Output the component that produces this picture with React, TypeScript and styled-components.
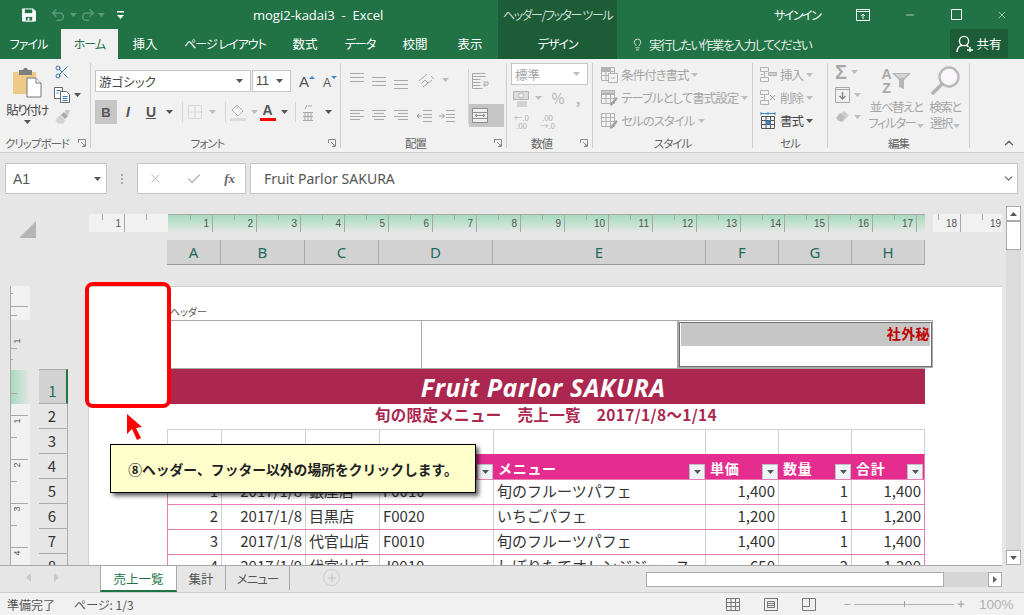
import styled, { createGlobalStyle } from "styled-components";
import { Check, ChevronDown, ChevronUp, Lightbulb, Minus, Plus, Redo2, Scissors, Undo2, X } from "lucide-react";

const JP = `"Noto Sans CJK JP", "Noto Sans", sans-serif`;
const GREEN = "#217346";
const DARK_GREEN = "#1c5d38";
const OFF = "#b2b2b2";

const Global = createGlobalStyle`
  html, body { margin: 0; padding: 0; background: #e6e6e6; }
  * { box-sizing: border-box; }
`;

/* ---------- small drawings ---------- */
const Caret = ({ off, color, up }: { off?: boolean; color?: string; up?: boolean }) => (
  <svg width="7" height="4" viewBox="0 0 7 4">
    <path d={up ? "M0 4h7L3.5 0z" : "M0 0h7L3.5 4z"} fill={color || (off ? "#bdbdbd" : "#555")} />
  </svg>
);

const LauncherMark = styled.svg`
  flex: none;
  margin-right: 4px;
`;

const Launcher = () => (
  <LauncherMark width="8" height="8" viewBox="0 0 8 8" fill="none" stroke="#8a8a8a">
    <path d="M.5 4V.5H7.5V7.5H4M3 3l4 4M5 7h2V5" />
  </LauncherMark>
);

const Lines = ({ rows, stroke = "#a8a8a8" }: { rows: [number, number][]; stroke?: string }) => (
  <svg width="16" height="16" viewBox="0 0 16 16" stroke={stroke}>
    {rows.map(([x, y], i) => (
      <path key={i} d={`M${x} ${y}.5H${16 - x}`} />
    ))}
  </svg>
);

const AlignV = ({ y }: { y: number }) => <Lines rows={[[1, y], [1, y + 4], [1, y + 8]]} />;

const AlignH = ({ kind }: { kind: "l" | "c" | "r" }) => (
  <svg width="16" height="14" viewBox="0 0 16 14" stroke="#a8a8a8">
    {[1, 4, 7, 10].map((y, i) => {
      const short = i % 2 === 1;
      const a = !short ? 1 : kind === "l" ? 1 : kind === "c" ? 3 : 5;
      const b = !short ? 15 : kind === "l" ? 11 : kind === "c" ? 13 : 15;
      return <path key={y} d={`M${a} ${y}.5H${b}`} />;
    })}
  </svg>
);

const Indent = ({ out }: { out?: boolean }) => (
  <svg width="17" height="14" viewBox="0 0 17 14" fill="none">
    <path d="M7 1.5h9M7 5.5h9M7 8.5h9M7 12.5h9" stroke="#a8a8a8" />
    <path d={out ? "M6 7H1M3.5 4.5 1 7l2.5 2.5" : "M0 7h5M3 4.5 5.5 7 3 9.5"} stroke="#9a9a9a" />
  </svg>
);

const SheetIcon = ({ tone = OFF, mark }: { tone?: string; mark?: "cond" | "table" | "style" }) => (
  <svg width="17" height="17" viewBox="0 0 17 17" fill="none" stroke={tone}>
    <path d="M.5 1.5h13v13H.5zM.5 5.5h13M.5 9.5h13M5 1.5v13M9.5 1.5v13" />
    {mark === "cond" && <path d="M.5 1.5h8v3h-8z" fill={tone} />}
    {mark === "cond" && <path d="M7.5 7.5h9v9h-9zM10 12h4" fill="#f1f1f1" />}
    {mark === "table" && <path d="M.5 1.5h13v3H.5z" fill="#c9c9c9" />}
    {mark !== "cond" && <path d="M9 15l6-7 2 1.5-6 7H9z" fill="#a0a0a0" stroke="none" />}
  </svg>
);

const CellIcon = ({ kind }: { kind: "ins" | "del" | "fmt" }) =>
  kind === "fmt" ? (
    <svg width="17" height="18" viewBox="0 0 17 18" fill="none" stroke="#555">
      <path d="M1 1.5h14M1 0v3M15 0v3M8 0v3" stroke="#3b7fc4" />
      <path d="M1.5 4.5h13v12h-13zM1.5 8.5h13M1.5 12.5h13M6 4.5v12M10.5 4.5v12" />
      <path d="M6 8.5h4.5v4H6z" fill="#3b7fc4" stroke="none" />
    </svg>
  ) : (
    <svg width="17" height="17" viewBox="0 0 17 17" fill="none" stroke={OFF}>
      <path d="M.5 1.5h8v4h-8zM.5 11.5h8v4h-8zM4.5 5.5v6M.5 8.5h3" />
      {kind === "ins" ? (
        <path d="M8.5 6.5h8v3h-8z" fill="#d0d0d0" />
      ) : (
        <path d="M10 6l5 5M15 6l-5 5" stroke="#9a9a9a" />
      )}
    </svg>
  );

const PasteIcon = () => (
  <svg width="30" height="30" viewBox="0 0 30 30">
    <path d="M1 4h23v22H1z" fill="#efc987" />
    <path d="M7 2h4l1-2h3l1 2h4v5H7z" fill="#7f7f7f" />
    <path d="M15 10h9l5 5v14H15z" fill="#fff" stroke="#777" />
    <path d="M24 10v5h5" fill="#fff" stroke="#777" />
  </svg>
);

const CopyIcon = () => (
  <svg width="16" height="16" viewBox="0 0 16 16" fill="#fff" stroke="#666">
    <path d="M.5.5h8v11h-8z" />
    <path d="M6.5 4.5h6l3 3v8h-9z" />
    <path d="M2.5 3.5h4M2.5 6h2M8.5 9.5h5M8.5 11.5h5M8.5 13.5h5" stroke="#2f78bd" />
  </svg>
);

const BrushIcon = () => (
  <svg width="17" height="15" viewBox="0 0 17 15">
    <path d="M11 0l5 0-1 4-3 1z" fill="#c8c8c8" />
    <path d="M10 2l4 4-3 3-4-4z" fill="#a9a9a9" />
    <path d="M6 5l5 5-2 4-3-1-1 1-4-3 2-1-1-1z" fill="#d2d2d2" />
  </svg>
);

const SaveIcon = () => (
  <svg width="15" height="14" viewBox="0 0 15 14" fill="none">
    <path d="M.5.5h11.5l2.5 2.5v10.5H.5z" stroke="#fff" fill="#fff" />
    <path d="M3 1h8v4H3z" fill={GREEN} />
    <path d="M3.5 8.5h8v5h-8z" fill={GREEN} stroke="#fff" />
    <path d="M6 10h2v3H6z" fill="#fff" />
  </svg>
);

const PersonPlus = () => (
  <svg width="18" height="18" viewBox="0 0 18 18" fill="none" stroke="#fff" strokeWidth="1.4">
    <circle cx="8" cy="6" r="4.6" />
    <path d="M1 17c0-4 2.5-6.5 5-6.5M10.500 10.500c.8.300 1.500.8 2 1.500M11 15h6M14 12v5" />
  </svg>
);

const FillIcon = () => (
  <svg width="17" height="17" viewBox="0 0 17 17" fill="none">
    <path d="M7 1l6 6-5 5-6-6z" stroke="#b5b5b5" fill="#f6f6f6" />
    <path d="M7 1v4" stroke="#b5b5b5" />
    <path d="M0 14h16v3H0z" fill="#dcdcdc" />
  </svg>
);

const SortIcon = () => (
  <svg width="19" height="16" viewBox="0 0 19 16">
    <path d="M0 0h19l-7 7v9l-5-2V7z" fill="#b5b5b5" />
    <path d="M3 1h13l-4 4H7z" fill="#d4d4d4" />
  </svg>
);

const LensIcon = () => (
  <svg width="29" height="29" viewBox="0 0 29 29" fill="none">
    <circle cx="18" cy="11" r="9.500" fill="#faf6fb" stroke="#b9b9b9" strokeWidth="2.400" />
    <path d="M11 18 2 27" stroke="#b3b3b3" strokeWidth="3.600" strokeLinecap="round" />
  </svg>
);

/* rulers: ticks every 44px from the left edge of the printed area */
const TopRuler = () => {
  const origin = 79;
  const marks = Array.from({ length: 22 }, (_, i) => i - 2);
  return (
    <svg width="913" height="18" viewBox="0 0 913 18" style={{ display: "block" }}>
      <defs>
        <linearGradient id="rulerTop" x1="0" y1="0" x2="0" y2="1">
          <stop offset="0" stopColor="#a5d8bd" />
          <stop offset="0.45" stopColor="#bce1cc" />
          <stop offset="1" stopColor="#e6e6e6" />
        </linearGradient>
      </defs>
      <rect x="0" width="79" height="18" fill="#f1f1f1" />
      <rect x="79" width="757" height="18" fill="url(#rulerTop)" />
      <rect x="844" width="69" height="18" fill="#f1f1f1" />
      <path d="M79 .5H836" stroke="#a8a8a8" />
      {marks.map((n) => {
        const x = origin + 44 * n;
        const label = n === 0 ? "" : String(Math.abs(n));
        return (
          <g key={n}>
            {n !== 0 && n > -2 && <path d={`M${x}.5 0V18`} stroke="#a8a8a8" />}
            <path d={`M${x + 22}.5 0V6`} stroke="#a8a8a8" />
            {n > -2 && label && (
              <text x={x - 3} y="13" textAnchor="end" fontSize="10" fontFamily="Liberation Sans" fill="#555">
                {label}
              </text>
            )}
          </g>
        );
      })}
    </svg>
  );
};

const SideRuler = () => {
  const longs: [number, string][] = [[49, "1"], [129, "1"], [173, "2"], [217, "3"], [261, "4"]];
  const shorts = [7, 29, 62, 73, 107, 151, 195, 239];
  return (
    <svg width="20" height="279" viewBox="0 0 20 279" style={{ display: "block" }}>
      <defs>
        <linearGradient id="rulerSide" x1="0" y1="0" x2="1" y2="0">
          <stop offset="0" stopColor="#a5d8bd" />
          <stop offset="1" stopColor="#e6e6e6" />
        </linearGradient>
      </defs>
      <rect width="20" height="34" fill="#f1f1f1" />
      <rect y="84" width="20" height="34" fill="url(#rulerSide)" />
      <rect y="118" width="20" height="161" fill="#f1f1f1" />
      <path d="M.5 0V279" stroke="#a8a8a8" />
      {shorts.map((y) => (
        <path key={y} d={`M0 ${y}.5H${y === 7 || y === 73 ? 3 : 7}`} stroke="#a8a8a8" />
      ))}
      {longs.map(([y, label], i) => (
        <g key={i}>
          <path d={`M0 ${y - (i === 0 ? 29 : 0)}.5H18`} stroke="#a8a8a8" />
          <text
            transform={`translate(10 ${y + 6}) rotate(-90)`}
            textAnchor="middle"
            fontSize="9"
            fontFamily="Liberation Sans"
            fill="#555"
          >
            {label}
          </text>
        </g>
      ))}
    </svg>
  );
};

/* ---------- page ---------- */
const Root = styled.div`
  position: relative;
  width: 1024px;
  height: 615px;
  overflow: hidden;
  display: flex;
  flex-direction: column;
  background: #e6e6e6;
  font-family: ${JP};
  font-feature-settings: "palt";
`;

const TitleBar = styled.div`
  height: 29px;
  display: flex;
  align-items: center;
  background: ${GREEN};
  color: #fff;
  font-size: 12px;
`;

const Quick = styled.span<{ $w: number }>`
  width: ${(p) => p.$w}px;
  flex: none;
  display: flex;
  align-items: center;
  justify-content: center;
`;

const DocTitle = styled.div`
  width: 372px;
  flex: none;
  padding-left: 127px;
  font: 13px "Open Sans", sans-serif;
  white-space: pre;
`;

const ToolContext = styled.div`
  width: 119px;
  height: 29px;
  flex: none;
  display: flex;
  align-items: center;
  justify-content: center;
  background: ${DARK_GREEN};
  color: #cfdcd4;
  font-size: 12px;
  letter-spacing: -1.4px;
  white-space: nowrap;
`;

const SignIn = styled.div`
  margin-left: 157px;
  width: 46px;
  flex: none;
  font-size: 12px;
  letter-spacing: -1.5px;
  text-align: center;
  white-space: nowrap;
`;

const TabBar = styled.div`
  height: 30px;
  display: flex;
  align-items: stretch;
  background: ${GREEN};
  color: #fff;
  font-size: 12.500px;
`;

const Tab = styled.div<{ $w: number; $active?: boolean; $context?: boolean; $kana?: boolean }>`
  width: ${(p) => p.$w}px;
  flex: none;
  display: flex;
  align-items: center;
  justify-content: center;
  padding-bottom: 1px;
  white-space: pre;
  font-size: ${(p) => (p.$kana ? 12 : 12.5)}px;
  letter-spacing: ${(p) => (p.$kana ? -1 : 0)}px;
  background: ${(p) => (p.$active ? "#f1f1f1" : p.$context ? DARK_GREEN : "transparent")};
  color: ${(p) => (p.$active ? GREEN : "#fff")};
`;

const TellMe = styled.div`
  margin-left: 14px;
  width: 319px;
  flex: none;
  display: flex;
  align-items: center;
  gap: 5px;
  color: #e2ece6;
  font-size: 12.500px;
  letter-spacing: -1.5px;
`;

const Share = styled.div`
  width: 58px;
  height: 29px;
  flex: none;
  display: flex;
  align-items: center;
  justify-content: center;
  gap: 2px;
  background: ${DARK_GREEN};
  font-size: 12.500px;
`;

const Ribbon = styled.div`
  position: relative;
  height: 94px;
  flex: none;
  display: flex;
  background: #f1f1f1;
  border-bottom: 1px solid #cdcdcd;
  color: #444;
`;

const Group = styled.div<{ $w: number; $pad?: number }>`
  width: ${(p) => p.$w}px;
  flex: none;
  height: 85px;
  margin-top: 4px;
  display: flex;
  flex-direction: column;
  padding-left: ${(p) => p.$pad ?? 0}px;
  border-right: 1px solid #cfcfcf;
`;

const GroupBody = styled.div`
  height: 71px;
  flex: none;
  display: flex;
`;

const GroupFoot = styled.div<{ $pad?: number }>`
  height: 18px;
  flex: none;
  display: flex;
  align-items: center;
  margin-left: ${(p) => -(p.$pad ?? 0)}px;
`;

const GroupName = styled.span<{ $launcher?: boolean }>`
  flex: 1;
  text-align: center;
  font-size: 11.500px;
  letter-spacing: -1px;
  white-space: nowrap;
  color: #666;
  padding-right: ${(p) => (p.$launcher ? 4 : 0)}px;
`;

const Col = styled.div<{ $w?: number; $gap?: number; $top?: number }>`
  width: ${(p) => (p.$w ? `${p.$w}px` : "auto")};
  flex: none;
  display: flex;
  flex-direction: column;
  align-items: flex-start;
  gap: ${(p) => p.$gap ?? 0}px;
  padding-top: ${(p) => p.$top ?? 0}px;
`;

const Row = styled.div<{ $gap?: number }>`
  display: flex;
  align-items: center;
  gap: ${(p) => p.$gap ?? 0}px;
`;

const Tool = styled.span<{ $w: number; $h?: number; $on?: boolean; $off?: boolean }>`
  width: ${(p) => p.$w}px;
  height: ${(p) => p.$h ?? 24}px;
  flex: none;
  display: flex;
  align-items: center;
  justify-content: center;
  background: ${(p) => (p.$on ? "#c6c6c6" : "transparent")};
  color: ${(p) => (p.$off ? OFF : "#444")};
`;

const BigLabel = styled.div<{ $off?: boolean }>`
  font-size: 12.500px;
  line-height: 16px;
  letter-spacing: -1.5px;
  white-space: nowrap;
  text-align: center;
  color: ${(p) => (p.$off ? "#a6a6a6" : "#444")};
`;

const Sep = styled.span`
  width: 1px;
  height: 20px;
  flex: none;
  background: #d4d4d4;
`;

const Combo = styled.div<{ $w: number; $h?: number; $off?: boolean }>`
  width: ${(p) => p.$w}px;
  height: ${(p) => p.$h ?? 22}px;
  flex: none;
  display: flex;
  align-items: center;
  justify-content: space-between;
  padding: 0 7px 0 3px;
  background: #fff;
  border: 1px solid #c6c6c6;
  font-size: 12.500px;
  color: ${(p) => (p.$off ? "#a6a6a6" : "#444")};
`;

const LetterA = styled.span<{ $size: number; $bold?: boolean; $italic?: boolean; $line?: boolean; $color?: string }>`
  font-family: "Liberation Sans", sans-serif;
  font-size: ${(p) => p.$size}px;
  line-height: 1;
  font-weight: ${(p) => (p.$bold ? 700 : 400)};
  font-style: ${(p) => (p.$italic ? "italic" : "normal")};
  text-decoration: ${(p) => (p.$line ? "underline" : "none")};
  color: ${(p) => p.$color || "#555"};
`;

const ColorA = styled.span`
  width: 16px;
  display: flex;
  flex-direction: column;
  align-items: center;
  font: 700 14px/14px "Liberation Sans", sans-serif;
  color: #555;
  &::after {
    content: "";
    width: 16px;
    height: 3px;
    margin-top: 1px;
    background: #f00;
  }
`;

const StyleItem = styled.div<{ $off?: boolean; $gap?: number }>`
  height: 23px;
  display: flex;
  align-items: center;
  gap: ${(p) => p.$gap ?? 3}px;
  font-size: 12.500px;
  letter-spacing: -1px;
  white-space: nowrap;
  color: ${(p) => (p.$off ? "#a6a6a6" : "#444")};
`;

const Collapse = styled.span`
  position: absolute;
  right: 8px;
  bottom: 2px;
  display: flex;
`;

const FormulaStrip = styled.div`
  height: 53px;
  flex: none;
  display: flex;
  align-items: flex-start;
  padding: 10px 6px 0 5px;
`;

const NameBox = styled.div`
  width: 102px;
  height: 31px;
  flex: none;
  display: flex;
  align-items: center;
  justify-content: space-between;
  padding: 0 5px 0 7px;
  background: #fff;
  border: 1px solid #c6c6c6;
  font: 14px "Liberation Sans", sans-serif;
  color: #555;
`;

const Grip = styled.span`
  width: 30px;
  height: 31px;
  flex: none;
  display: flex;
  flex-direction: column;
  align-items: center;
  justify-content: center;
  gap: 2px;
  & > i {
    width: 2px;
    height: 2px;
    background: #a8a8a8;
  }
`;

const FormulaTools = styled.div`
  width: 109px;
  height: 31px;
  flex: none;
  display: flex;
  align-items: center;
  justify-content: space-between;
  padding: 0 10px;
  margin-right: 4px;
  background: #fff;
  border: 1px solid #c6c6c6;
`;

const Fx = styled.span`
  font: italic 700 13px "Liberation Serif", serif;
  color: #666;
`;

const FormulaInput = styled.div`
  flex: 1;
  height: 31px;
  display: flex;
  align-items: center;
  justify-content: space-between;
  padding: 0 2px 0 13px;
  background: #fff;
  border: 1px solid #c6c6c6;
  font: 14px "Noto Sans", sans-serif;
  color: #555;
`;

const Main = styled.div`
  height: 359px;
  flex: none;
  display: flex;
`;

const Workspace = styled.div`
  width: 1002px;
  flex: none;
  display: flex;
  flex-direction: column;
  padding-top: 8px;
`;

const RulerRow = styled.div`
  height: 18px;
  flex: none;
  display: flex;
`;

const Corner = styled.div`
  width: 89px;
  flex: none;
  padding: 5px 0 0 19px;
`;

const ColHeads = styled.div`
  height: 25px;
  flex: none;
  margin: 8px 0 21px 167px;
  width: 758px;
  display: flex;
  border-bottom: 1px solid #999;
`;

const ColHead = styled.div<{ $w: number }>`
  width: ${(p) => p.$w}px;
  flex: none;
  display: flex;
  align-items: center;
  justify-content: center;
  background: #d2d2d2;
  border-right: 1px solid #ababab;
  font: 15px "Noto Sans", sans-serif;
  color: #1f6b5c;
`;

const BodyRow = styled.div`
  height: 279px;
  flex: none;
  overflow: hidden;
  display: flex;
  padding-left: 10px;
`;

const RowHeads = styled.div`
  width: 29px;
  flex: none;
  margin: 0 20px 0 9px;
  padding-top: 83px;
  display: flex;
  flex-direction: column;
`;

const RowHead = styled.div<{ $h: number; $active?: boolean }>`
  height: ${(p) => p.$h}px;
  flex: none;
  display: flex;
  align-items: flex-end;
  justify-content: center;
  padding: 0 ${(p) => (p.$active ? 0 : 2)}px 1px 0;
  background: ${(p) => (p.$active ? "#d2d2d2" : "#e6e6e6")};
  border-top: ${(p) => (p.$active ? "1px solid #ababab" : "none")};
  border-bottom: 1px solid #ababab;
  border-right: ${(p) => (p.$active ? `2px solid ${GREEN}` : "1px solid #ababab")};
  font: 15px/22px ${JP};
  color: ${(p) => (p.$active ? "#1f6b5c" : "#333")};
`;

const Page = styled.div`
  width: 914px;
  flex: none;
  background: #fff;
  border-left: 1px solid #d0d0d0;
  border-top: 1px solid #cfcfcf;
  padding-left: 78px;
`;

const HeaderTag = styled.div`
  height: 33px;
  padding: 19px 0 0 3px;
  font-size: 10px;
  line-height: 12px;
  color: #555;
`;

const HeaderBox = styled.div`
  width: 766px;
  height: 48px;
  display: flex;
  border-top: 1px solid #a9a9a9;
`;

const HeaderPart = styled.div<{ $w: number }>`
  flex: none;
  width: ${(p) => p.$w}px;
  border-right: 1px solid #a9a9a9;
`;

const HeaderActive = styled.div`
  flex: 1;
  padding: 1px 2px 0 1px;
  border: 1px solid #a9a9a9;
  outline: 1px solid #6e6e6e;
  outline-offset: -2px;
  border-top: none;
`;

const Shaded = styled.div`
  height: 24px;
  margin-left: 1px;
  background: #c6c6c6;
  text-align: right;
  font-weight: 700;
  font-size: 14px;
  letter-spacing: 0.4px;
  font-feature-settings: normal;
  line-height: 23px;
  color: #c00000;
`;

const TableWrap = styled.div`
  width: 758px;
  display: flex;
  flex-direction: column;
  font-feature-settings: normal;
`;

const TitleRow = styled.div`
  height: 36px;
  flex: none;
  display: flex;
  align-items: center;
  justify-content: center;
  padding-right: 6px;
  background: #ac274f;
  border-top: 1px solid #a9a9a9;
  color: #fff;
  font: italic 700 25px "Open Sans", sans-serif;
  letter-spacing: 0.5px;
`;

const SubRow = styled.div`
  height: 25px;
  flex: none;
  display: flex;
  align-items: center;
  justify-content: center;
  padding-bottom: 5px;
  color: #ac274f;
  font-weight: 700;
  font-size: 15.500px;
  letter-spacing: 0.35px;
  white-space: pre;
`;

const GridRow = styled.div<{ $kind: "blank" | "head" | "data" }>`
  height: 25px;
  flex: none;
  display: grid;
  grid-template-columns: 54px 84px 74px 114px 212px 73px 73px 72px;
  background: ${(p) => (p.$kind === "head" ? "#e42d8f" : "#fff")};
  border-top: 1px solid ${(p) => (p.$kind === "blank" ? "#d0d0d0" : p.$kind === "head" ? "#e42d8f" : "#e97cb7")};
  border-left: 1px solid ${(p) => (p.$kind === "blank" ? "#d0d0d0" : "#e97cb7")};
  border-right: 1px solid ${(p) => (p.$kind === "blank" ? "#d0d0d0" : "#e97cb7")};
`;

const Cell = styled.div<{ $right?: boolean }>`
  min-width: 0;
  padding: 0 ${(p) => (p.$right ? 3 : 0)}px 0 ${(p) => (p.$right ? 0 : 3)}px;
  border-right: 1px solid #d0d0d0;
  text-align: ${(p) => (p.$right ? "right" : "left")};
  font-size: 15px;
  line-height: 22px;
  white-space: nowrap;
  color: #333;
  &:last-child {
    border-right: none;
  }
`;

const HeadCell = styled.div`
  min-width: 0;
  display: flex;
  align-items: center;
  justify-content: space-between;
  padding: 0 1px 3px 4px;
  color: #fff;
  font-weight: 700;
  font-size: 14px;
  letter-spacing: 0.7px;
`;

const FilterBtn = styled.span`
  width: 16px;
  height: 16px;
  flex: none;
  margin-top: 9px;
  display: flex;
  align-items: center;
  justify-content: center;
  background: #f1f4f7;
  border: 1px solid #b9c0c6;
`;

const ScrollCol = styled.div`
  width: 15px;
  flex: none;
  margin-left: 4px;
  display: flex;
  flex-direction: column;
  background: #dcdcdc;
`;

const ScrollBtn = styled.span<{ $w?: number }>`
  width: ${(p) => p.$w ?? 15}px;
  height: 15px;
  flex: none;
  display: flex;
  align-items: center;
  justify-content: center;
  background: #fff;
  border: 1px solid #ababab;
`;

const VThumb = styled.div`
  height: 29px;
  flex: none;
  background: #fff;
  border: 1px solid #ababab;
`;

const Spacer = styled.div`
  flex: 1;
`;

const SheetStrip = styled.div`
  height: 27px;
  flex: none;
  width: 1002px;
  display: flex;
  align-items: flex-start;
  border-top: 1px solid #a9a9a9;
`;

const SheetNav = styled.div`
  width: 100px;
  height: 23px;
  flex: none;
  display: flex;
  align-items: center;
  padding-left: 26px;
  gap: 23px;
`;

const SheetTab = styled.div<{ $w: number; $active?: boolean; $kana?: boolean }>`
  width: ${(p) => p.$w}px;
  height: 24px;
  margin-top: ${(p) => (p.$active ? -1 : 0)}px;
  flex: none;
  display: flex;
  align-items: center;
  justify-content: center;
  font-size: 12.500px;
  letter-spacing: ${(p) => (p.$kana ? -1 : 0)}px;
  font-feature-settings: ${(p) => (p.$active ? "normal" : "palt")};
  color: ${(p) => (p.$active ? GREEN : "#555")};
  background: ${(p) => (p.$active ? "#fff" : "transparent")};
  border-left: ${(p) => (p.$active ? "1px solid #a9a9a9" : "none")};
  border-top: ${(p) => (p.$active ? "1px solid #a9a9a9" : "none")};
  border-right: 1px solid #a9a9a9;
  border-bottom: ${(p) => (p.$active ? `2px solid ${GREEN}` : "none")};
  box-sizing: ${(p) => (p.$active ? "content-box" : "border-box")};
`;

const AddSheet = styled.span`
  width: 17px;
  height: 17px;
  flex: none;
  margin: 3px 0 0 33px;
  display: flex;
  align-items: center;
  justify-content: center;
  border: 1px solid #cdcdcd;
  border-radius: 50%;
  color: #c4c4c4;
`;

const HScroll = styled.div`
  width: 356px;
  height: 15px;
  margin: 6px 0 0 auto;
  flex: none;
  display: flex;
  background: #d6d6d6;
`;

const HThumb = styled.div`
  width: 298px;
  flex: none;
  background: #fff;
  border: 1px solid #ababab;
`;

const StatusBar = styled.div`
  height: 23px;
  flex: none;
  display: flex;
  align-items: center;
  padding-left: 7px;
  background: #f1f1f1;
  border-top: 1px solid #cdcdcd;
  font-size: 12px;
  color: #555;
`;

const StatusText = styled.span<{ $w: number }>`
  width: ${(p) => p.$w}px;
  flex: none;
  white-space: nowrap;
`;

const ViewBtn = styled.span`
  width: 38px;
  flex: none;
  display: flex;
  justify-content: center;
`;

const Slider = styled.div`
  width: 100px;
  height: 1px;
  flex: none;
  margin: 0 2px;
  display: flex;
  justify-content: center;
  align-items: center;
  background: #b0b0b0;
  &::after {
    content: "";
    width: 1px;
    height: 6px;
    background: #a0a0a0;
  }
`;

const Percent = styled.span`
  margin-left: 13px;
  font: 13.500px "Liberation Sans", sans-serif;
  color: #b0b0b0;
`;

const RedBox = styled.div`
  position: absolute;
  left: 85px;
  top: 282px;
  width: 86px;
  height: 126px;
  border: 4px solid #f00;
  border-radius: 8px;
`;

const RedArrow = styled.svg`
  position: absolute;
  left: 126px;
  top: 414px;
`;

const Callout = styled.div`
  position: absolute;
  left: 110px;
  top: 444px;
  width: 366px;
  height: 49px;
  display: flex;
  align-items: center;
  justify-content: center;
  background: #ffffcc;
  border: 1px solid #000;
  box-shadow: 3px 3px 4px rgba(0, 0, 0, 0.6);
  font-weight: 700;
  font-size: 13.800px;
  font-feature-settings: normal;
  color: #222;
  white-space: nowrap;
`;

/* ---------- data ---------- */
const colHeads: [string, number][] = [
  ["A", 54], ["B", 84], ["C", 74], ["D", 114], ["E", 213], ["F", 73], ["G", 73], ["H", 73],
];

const sales = [
  ["1", "2017/1/8", "銀座店", "F0010", "旬のフルーツパフェ", "1,400", "1", "1,400"],
  ["2", "2017/1/8", "目黒店", "F0020", "いちごパフェ", "1,200", "1", "1,200"],
  ["3", "2017/1/8", "代官山店", "F0010", "旬のフルーツパフェ", "1,400", "1", "1,400"],
  ["4", "2017/1/9", "代官山店", "J0010", "しぼりたてオレンジジュース", "650", "2", "1,300"],
];

const rowNums: [string, number][] = [
  ["1", 35], ["2", 25], ["3", 25], ["4", 25], ["5", 25], ["6", 25], ["7", 25], ["8", 25],
];

const tabs: [string, number, boolean][] = [
  ["挿入", 54, false], ["ページ レイアウト", 106, true], ["数式", 54, false],
  ["データ", 56, true], ["校閲", 54, false], ["表示", 56, false],
];

const headCols = ["", "", "", "", "メニュー", "単価", "数量", "合計"];

export default function App() {
  return (
    <Root>
      <Global />
      <TitleBar>
        <Quick $w={22} />
        <Quick $w={14}><SaveIcon /></Quick>
        <Quick $w={14} />
        <Quick $w={16}><Undo2 size={16} color="#5c9a79" strokeWidth={2.2} /></Quick>
        <Quick $w={14}><Caret color="#5c9a79" /></Quick>
        <Quick $w={16}><Redo2 size={16} color="#5c9a79" strokeWidth={2.2} /></Quick>
        <Quick $w={10}><Caret color="#5c9a79" /></Quick>
        <Quick $w={8} />
        <Quick $w={12}>
          <svg width="9" height="8" viewBox="0 0 9 8">
            <path d="M1 0h7v1.500H1zM1 4h7L4.500 8z" fill="#fff" />
          </svg>
        </Quick>
        <DocTitle>{"mogi2-kadai3  -  Excel"}</DocTitle>
        <ToolContext>ヘッダー/フッター ツール</ToolContext>
        <SignIn>サインイン</SignIn>
        <Quick $w={36} />
        <Quick $w={14}>
          <svg width="14" height="12" viewBox="0 0 14 12" fill="none" stroke="#fff">
            <path d="M.5.5h13v11H.5zM.5 2.500h13M7 10V5M5 7l2-2 2 2" />
          </svg>
        </Quick>
        <Quick $w={34} />
        <Quick $w={12}><Minus size={12} color="#fff" strokeWidth={1.2} /></Quick>
        <Quick $w={34} />
        <Quick $w={12}>
          <svg width="11" height="11" viewBox="0 0 11 11" fill="none" stroke="#fff">
            <path d="M.5.5h10v10H.5z" />
          </svg>
        </Quick>
        <Quick $w={34} />
        <Quick $w={12}><X size={14} color="#fff" strokeWidth={1.1} /></Quick>
      </TitleBar>

      <TabBar>
        <Tab $w={57} $kana>ファイル</Tab>
        <Tab $w={57} $active $kana style={{ marginLeft: 4 }}>ホーム</Tab>
        {tabs.map(([t, w, kana]) => (
          <Tab key={t} $w={w} $kana={kana}>{t}</Tab>
        ))}
        <Tab $w={119} $context $kana>デザイン</Tab>
        <TellMe>
          <Lightbulb size={13} color="#fff" strokeWidth={1.4} />
          実行したい作業を入力してください
        </TellMe>
        <Share>
          <PersonPlus />
          共有
        </Share>
      </TabBar>

      <Ribbon>
        <Group $w={91}>
          <GroupBody>
            <Col $w={54} $top={5} style={{ alignItems: "center" }}>
              <PasteIcon />
              <BigLabel style={{ marginTop: 2, lineHeight: "20px" }}>貼り付け</BigLabel>
              <Caret />
            </Col>
            <Col $w={17} $top={1} $gap={7}>
              <Scissors size={16} color="#2f6ca8" strokeWidth={1.4} />
              <Row $gap={4}><CopyIcon /><Caret /></Row>
              <BrushIcon />
            </Col>
          </GroupBody>
          <GroupFoot><GroupName $launcher>クリップボード</GroupName><Launcher /></GroupFoot>
        </Group>

        <Group $w={250} $pad={4}>
          <GroupBody>
            <Col $gap={8} $top={7}>
              <Row $gap={1}>
                <Combo $w={156}>游ゴシック<Caret /></Combo>
                <Combo $w={39}>
                  <span style={{ fontFamily: "Liberation Sans" }}>11</span>
                  <Caret />
                </Combo>
                <Tool $w={22} $h={22} style={{ marginLeft: 4 }}>
                  <LetterA $size={15}>A</LetterA>
                  <svg width="6" height="12" viewBox="0 0 6 12"><path d="M0 4l3-3 3 3z" fill="#3f84c6" /></svg>
                </Tool>
                <Tool $w={22} $h={22}>
                  <LetterA $size={12} style={{ marginTop: 4 }}>A</LetterA>
                  <svg width="6" height="12" viewBox="0 0 6 12"><path d="M0 1h6L3 4z" fill="#3f84c6" /></svg>
                </Tool>
              </Row>
              <Row>
                <Tool $w={22} $on><LetterA $size={13} $bold>B</LetterA></Tool>
                <Tool $w={22}><LetterA $size={14} $italic $bold>I</LetterA></Tool>
                <Tool $w={24}><LetterA $size={14} $bold $line>U</LetterA></Tool>
                <Tool $w={13}><Caret /></Tool>
                <Tool $w={6} />
                <Sep />
                <Tool $w={23}>
                  <svg width="14" height="14" viewBox="0 0 14 14" fill="none" stroke="#c4bccb" strokeDasharray="1 1">
                    <path d="M.5.5h13v13H.5zM.5 7h13M7 .5v13" />
                  </svg>
                </Tool>
                <Tool $w={12}><Caret off /></Tool>
                <Tool $w={7} />
                <Sep />
                <Tool $w={24}><FillIcon /></Tool>
                <Tool $w={8}><Caret off /></Tool>
                <Tool $w={19}><ColorA>A</ColorA></Tool>
                <Tool $w={14}><Caret /></Tool>
                <Tool $w={4} />
                <Sep />
                <Tool $w={24}>
                  <svg width="12" height="17" viewBox="0 0 12 17" fill="none" stroke="#a8a8a8">
                    <path d="M5 1l-2 4M6 2h4M1 8.500h10M3 8.500v8M9 8.500v8M1 12.500h10M1 16.500h10M6 8.500v8" />
                  </svg>
                </Tool>
                <Tool $w={16}><Caret /></Tool>
              </Row>
            </Col>
          </GroupBody>
          <GroupFoot $pad={4}><GroupName $launcher>フォント</GroupName><Launcher /></GroupFoot>
        </Group>

        <Group $w={166} $pad={5}>
          <GroupBody>
            <Col $w={122} $gap={14} $top={5}>
              <Row>
                <Tool $w={22}><AlignV y={1} /></Tool>
                <Tool $w={22} style={{ paddingTop: 3 }}><AlignV y={3} /></Tool>
                <Tool $w={22} style={{ paddingTop: 6 }}><AlignV y={5} /></Tool>
                <Tool $w={28} $off>
                  <svg width="19" height="17" viewBox="0 0 19 17" fill="none" stroke="#a8a8a8">
                    <path d="M2 9l8-7M4 12l4-4 3 3M6 15l9-7M14 4l3 3" />
                  </svg>
                </Tool>
                <Tool $w={10}><Caret off /></Tool>
              </Row>
              <Row>
                <Tool $w={22} $h={20}><AlignH kind="l" /></Tool>
                <Tool $w={22} $h={20}><AlignH kind="c" /></Tool>
                <Tool $w={22} $h={20}><AlignH kind="r" /></Tool>
                <Tool $w={24} $h={20}><Indent out /></Tool>
                <Tool $w={22} $h={20}><Indent /></Tool>
              </Row>
            </Col>
            <Sep style={{ height: 55, marginTop: 6 }} />
            <Col $gap={13} $top={7}>
              <Tool $w={34} $h={21} style={{ justifyContent: "flex-start", paddingLeft: 3 }}>
                <svg width="17" height="16" viewBox="0 0 17 16" fill="none" stroke="#a8a8a8">
                  <path d="M.5.5h13M.5 3.500h13M.5.5v15M.5 6.500h8M.5 9.500h8M.5 12.500h8M.5 15.500h10M11 9h5v3h-4M13.500 10l-2 2 2 2" />
                </svg>
              </Tool>
              <Tool $w={35} $h={23} $on style={{ justifyContent: "flex-start", paddingLeft: 3 }}>
                <svg width="16" height="15" viewBox="0 0 16 15" fill="#efefef" stroke="#8f8f8f">
                  <path d="M.5.5h15v14H.5zM.5 4.500h15M.5 10.500h15M3 7.500h10M3 7.500l2-1.500M3 7.500l2 1.500M13 7.500l-2-1.500M13 7.500l-2 1.500" />
                </svg>
              </Tool>
            </Col>
          </GroupBody>
          <GroupFoot $pad={5}><GroupName $launcher>配置</GroupName><Launcher /></GroupFoot>
        </Group>

        <Group $w={86} $pad={4}>
          <GroupBody>
            <Col $gap={3}>
              <Combo $w={77} $off>標準<Caret off /></Combo>
              <Row style={{ height: 20 }}>
                <Tool $w={20} $h={20}>
                  <svg width="17" height="17" viewBox="0 0 17 17" fill="none" stroke="#b5b5b5">
                    <path d="M.5 1.500h15v8H.5z" fill="#dcdcdc" />
                    <circle cx="8" cy="5.500" r="2.500" fill="#f1f1f1" />
                    <path d="M4 12h10M4 14h10M4 16h10" />
                  </svg>
                </Tool>
                <Tool $w={14} $h={20}><Caret off /></Tool>
                <Tool $w={26} $h={20} $off style={{ fontSize: 14 }}>%</Tool>
                <Tool $w={14} $h={20} $off style={{ fontWeight: 700, fontSize: 13 }}>,</Tool>
              </Row>
              <Row $gap={5} style={{ height: 22 }}>
                <Tool $w={21} $h={22} $off style={{ fontSize: 8, lineHeight: "8px", textAlign: "center" }}>←.0<br />.00</Tool>
                <Tool $w={21} $h={22} $off style={{ fontSize: 8, lineHeight: "8px", textAlign: "center" }}>.00<br />→.0</Tool>
              </Row>
            </Col>
          </GroupBody>
          <GroupFoot $pad={4}><GroupName $launcher>数値</GroupName><Launcher /></GroupFoot>
        </Group>

        <Group $w={160} $pad={8}>
          <GroupBody>
            <Col>
              <StyleItem $off><SheetIcon mark="cond" />条件付き書式<Caret off /></StyleItem>
              <StyleItem $off><SheetIcon mark="table" />テーブルとして書式設定<Caret off /></StyleItem>
              <StyleItem $off><SheetIcon mark="style" />セルのスタイル<Caret off /></StyleItem>
            </Col>
          </GroupBody>
          <GroupFoot $pad={8}><GroupName>スタイル</GroupName></GroupFoot>
        </Group>

        <Group $w={75} $pad={7}>
          <GroupBody>
            <Col>
              <StyleItem $off><CellIcon kind="ins" />挿入<Caret off /></StyleItem>
              <StyleItem $off><CellIcon kind="del" />削除<Caret off /></StyleItem>
              <StyleItem><CellIcon kind="fmt" />書式<Caret /></StyleItem>
            </Col>
          </GroupBody>
          <GroupFoot $pad={7}><GroupName>セル</GroupName></GroupFoot>
        </Group>

        <Group $w={142} $pad={7}>
          <GroupBody>
            <Col $w={35} $gap={7} $top={1}>
              <Row $gap={4}>
                <span style={{ font: "700 20px/16px Liberation Sans", color: "#a8a8a8" }}>Σ</span>
                <Caret off />
              </Row>
              <Row $gap={4}>
                <svg width="15" height="16" viewBox="0 0 15 16" fill="none" stroke="#a8a8a8">
                  <path d="M.5.500h14v15H.5z" />
                  <path d="M.5 2.500h14" />
                  <path d="M7.500 5v7M4.500 9l3 3 3-3" stroke="#888" strokeWidth="1.500" />
                </svg>
                <Caret off />
              </Row>
              <Row $gap={4}>
                <svg width="15" height="14" viewBox="0 0 15 14">
                  <path d="M9 1l5 4-6 7-5-1-2-3z" fill="#cfcfcf" />
                  <path d="M1 8l4-5 5 4-4 5z" fill="#bcbcbc" />
                </svg>
                <Caret off />
              </Row>
            </Col>
            <Col $w={52} $top={2} style={{ alignItems: "center" }}>
              <Row style={{ height: 31 }}>
                <span style={{ font: "700 14px/14px Liberation Sans", color: "#a8a8a8", textAlign: "center" }}>
                  A<br />Z
                </span>
                <SortIcon />
              </Row>
              <BigLabel $off style={{ marginTop: 3 }}>並べ替えと</BigLabel>
              <BigLabel $off>フィルター <Caret off /></BigLabel>
            </Col>
            <Col $w={36} $top={2} style={{ alignItems: "center", marginLeft: 5 }}>
              <Row style={{ height: 31 }}><LensIcon /></Row>
              <BigLabel $off style={{ marginTop: 3 }}>検索と</BigLabel>
              <BigLabel $off>選択 <Caret off /></BigLabel>
            </Col>
          </GroupBody>
          <GroupFoot $pad={7}><GroupName>編集</GroupName></GroupFoot>
        </Group>
        <Collapse><ChevronUp size={14} color="#666" strokeWidth={2.4} /></Collapse>
      </Ribbon>

      <FormulaStrip>
        <NameBox>A1<Caret /></NameBox>
        <Grip><i /><i /><i /></Grip>
        <FormulaTools>
          <X size={15} color="#bdbdbd" strokeWidth={1.6} />
          <Check size={16} color="#bdbdbd" strokeWidth={2.4} />
          <Fx>fx</Fx>
        </FormulaTools>
        <FormulaInput>
          Fruit Parlor SAKURA
          <ChevronDown size={13} color="#666" strokeWidth={2} />
        </FormulaInput>
      </FormulaStrip>

      <Main>
        <Workspace>
          <RulerRow>
            <Corner>
              <svg width="17" height="17" viewBox="0 0 17 17">
                <path d="M17 0v17H0z" fill="#b5b5b5" />
              </svg>
            </Corner>
            <TopRuler />
          </RulerRow>
          <ColHeads>
            {colHeads.map(([c, w]) => (
              <ColHead key={c} $w={w}>{c}</ColHead>
            ))}
          </ColHeads>
          <BodyRow>
            <SideRuler />
            <RowHeads>
              {rowNums.map(([n, h], i) => (
                <RowHead key={n} $h={h} $active={i === 0}>{n}</RowHead>
              ))}
            </RowHeads>
            <Page>
              <HeaderTag>ヘッダー</HeaderTag>
              <HeaderBox>
                <HeaderPart $w={255} />
                <HeaderPart $w={256} />
                <HeaderActive><Shaded>社外秘</Shaded></HeaderActive>
              </HeaderBox>
              <TableWrap>
                <TitleRow>Fruit Parlor SAKURA</TitleRow>
                <SubRow>{"旬の限定メニュー　売上一覧　2017/1/8～1/14"}</SubRow>
                <GridRow $kind="blank">
                  {headCols.map((_, i) => <Cell key={i} />)}
                </GridRow>
                <GridRow $kind="head">
                  {headCols.map((h, i) => (
                    <HeadCell key={i}>
                      <span>{h}</span>
                      <FilterBtn><Caret /></FilterBtn>
                    </HeadCell>
                  ))}
                </GridRow>
                {sales.map((r) => (
                  <GridRow key={r[0]} $kind="data">
                    <Cell $right>{r[0]}</Cell>
                    <Cell $right>{r[1]}</Cell>
                    <Cell>{r[2]}</Cell>
                    <Cell>{r[3]}</Cell>
                    <Cell>{r[4]}</Cell>
                    <Cell $right>{r[5]}</Cell>
                    <Cell $right>{r[6]}</Cell>
                    <Cell $right>{r[7]}</Cell>
                  </GridRow>
                ))}
              </TableWrap>
            </Page>
          </BodyRow>
        </Workspace>
        <ScrollCol>
          <ScrollBtn><Caret up /></ScrollBtn>
          <VThumb />
          <Spacer />
          <ScrollBtn><Caret /></ScrollBtn>
        </ScrollCol>
      </Main>

      <SheetStrip>
        <SheetNav>
          <svg width="5" height="9" viewBox="0 0 5 9"><path d="M5 0v9L0 4.500z" fill="#c8c8c8" /></svg>
          <svg width="5" height="9" viewBox="0 0 5 9"><path d="M0 0v9l5-4.500z" fill="#c8c8c8" /></svg>
        </SheetNav>
        <SheetTab $w={75} $active>売上一覧</SheetTab>
        <SheetTab $w={49}>集計</SheetTab>
        <SheetTab $w={64} $kana>メニュー</SheetTab>
        <AddSheet><Plus size={12} strokeWidth={2.4} /></AddSheet>
        <HScroll>
          <HThumb />
          <Spacer />
          <ScrollBtn $w={14}>
            <svg width="4" height="7" viewBox="0 0 4 7"><path d="M0 0v7l4-3.500z" fill="#666" /></svg>
          </ScrollBtn>
        </HScroll>
      </SheetStrip>

      <StatusBar>
        <StatusText $w={67}>準備完了</StatusText>
        <StatusText $w={640}>ページ: 1/3</StatusText>
        <ViewBtn>
          <svg width="14" height="13" viewBox="0 0 14 13" fill="none" stroke="#777">
            <path d="M.5.500h13v12H.5zM.5 4.500h13M.5 8.500h13M5 .5v12M9.500.5v12" />
          </svg>
        </ViewBtn>
        <ViewBtn>
          <svg width="14" height="13" viewBox="0 0 14 13" fill="none" stroke="#777">
            <path d="M.5.500h13v12H.5zM3.500 3.500h7v6h-7zM3.500 5.500h7M3.500 7.500h7" />
          </svg>
        </ViewBtn>
        <ViewBtn>
          <svg width="14" height="13" viewBox="0 0 14 13" fill="none" stroke="#777">
            <path d="M.5 12.500V.5H13.500V12.500zM.5 8.500h7M7.500.5v8" />
          </svg>
        </ViewBtn>
        <Quick $w={15} />
        <Minus size={9} color="#a8a8a8" strokeWidth={3} />
        <Slider />
        <Plus size={10} color="#a8a8a8" strokeWidth={3} />
        <Percent>100%</Percent>
      </StatusBar>

      <RedBox />
      <RedArrow width="16" height="27" viewBox="0 0 16 27">
        <path d="M1 0v20l5-5 5 11 4-2-5-10 6-1z" fill="#f00" />
      </RedArrow>
      <Callout>⑧ヘッダー、フッター以外の場所をクリックします。</Callout>
    </Root>
  );
}
